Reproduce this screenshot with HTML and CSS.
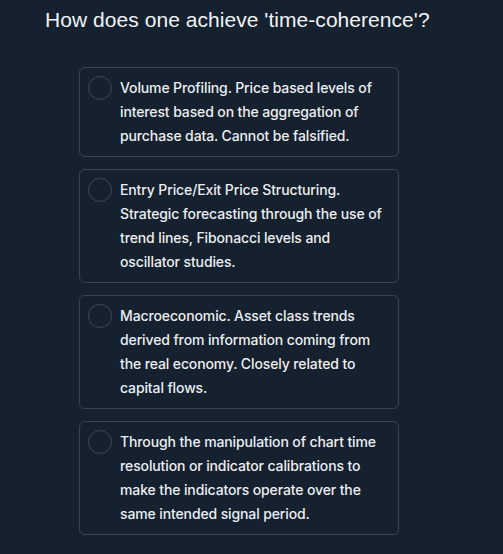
FILE: index.html
```html
<!DOCTYPE html>
<html>
<head>
<meta charset="utf-8">
<link rel="stylesheet" href="styles.css">
</head>
<body>
<h1 class="question">How does one achieve 'time-coherence'?</h1>
<div class="options">
  <label class="option"><span class="radio"></span><span class="text">Volume Profiling. Price based levels of interest based on the aggregation of purchase data. Cannot be falsified.</span></label>
  <label class="option"><span class="radio"></span><span class="text">Entry Price/Exit Price Structuring. Strategic forecasting through the use of trend lines, Fibonacci levels and oscillator studies.</span></label>
  <label class="option"><span class="radio"></span><span class="text">Macroeconomic. Asset class trends derived from information coming from the real economy. Closely related to capital flows.</span></label>
  <label class="option"><span class="radio"></span><span class="text">Through the manipulation of chart time resolution or indicator calibrations to make the indicators operate over the same intended signal period.</span></label>
</div>
</body>
</html>
```
FILE: styles.css
```css
html, body {
  margin: 0;
  padding: 0;
  background: #15212e;
}
body {
  width: 503px;
  height: 554px;
  overflow: hidden;
}
.question {
  margin: 8px 0 0 45px;
  font-family: "Liberation Sans", Arial, sans-serif;
  font-size: 21px;
  line-height: 24px;
  font-weight: 400;
  letter-spacing: 0.05px;
  color: #f1f3f5;
}
.options {
  margin: 35px 0 0 79px;
  width: 320px;
  display: flex;
  flex-direction: column;
  gap: 12px;
}
.option {
  display: flex;
  gap: 8px;
  padding: 8px 10px 8px 8px;
  border: 1px solid #384452;
  border-radius: 6px;
  font-family: Inter, "Noto Sans", sans-serif;
  font-size: 14px;
  line-height: 24px;
  font-weight: 500;
  letter-spacing: -0.12px;
  color: #eceef1;
}
.radio {
  flex: none;
  width: 22px;
  height: 22px;
  border: 1px solid #3c4855;
  border-radius: 50%;
}
.text {
  flex: 1;
}
```
